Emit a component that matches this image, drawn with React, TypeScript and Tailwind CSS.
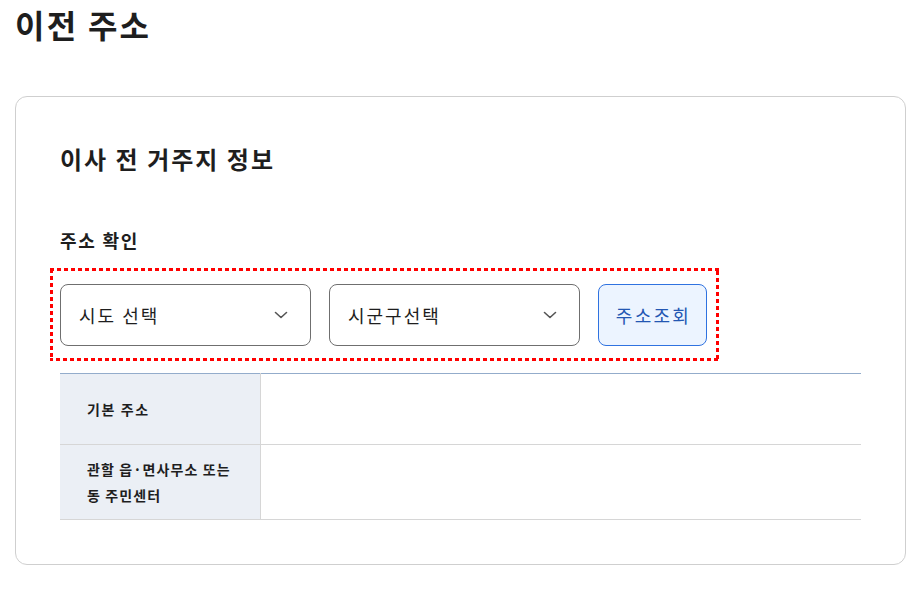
import { useState } from 'react';

const font = { fontFamily: '"Noto Sans CJK KR", "Noto Sans", sans-serif' };

function Chevron() {
  return (
    <svg width="14" height="8" viewBox="0 0 14 8" fill="none" className="shrink-0">
      <path d="M1.5 1.5 7 6.5l5.5-5" stroke="#555" strokeWidth="1.6" strokeLinecap="round" strokeLinejoin="round" />
    </svg>
  );
}

function SelectBox({ label }: { label: string }) {
  return (
    <button className="flex h-[62px] w-[251px] items-center justify-between rounded-lg border border-[#6f6f6f] bg-white pl-[18px] pr-[22px] text-[18px] tracking-[2px] text-[#1e1e1e]">
      <span>{label}</span>
      <Chevron />
    </button>
  );
}

export default function App() {
  const [sido] = useState('시도 선택');
  const [sigungu] = useState('시군구선택');

  return (
    <div className="min-h-[592px] bg-white pl-[15px] pr-[17px] text-[#1e1e1e]" style={font}>
      <h1 className="pt-[1px] text-[32px] font-bold leading-[46px] tracking-[2.25px]">이전 주소</h1>

      <div className="mt-[49px] rounded-xl border border-[#cfcfcf] p-11">
        <h2 className="text-[24px] font-bold leading-[36px] tracking-[2px]">이사 전 거주지 정보</h2>

        <h3 className="mt-[50px] text-[18px] font-bold leading-[27px] tracking-[1.75px]">주소 확인</h3>

        <div className="relative mt-[30px] flex w-fit gap-[18px]">
          <SelectBox label={sido} />
          <SelectBox label={sigungu} />
          <button className="h-[62px] w-[109px] rounded-lg border border-[#2f72e0] bg-[#ecf4ff] pl-[2px] text-[18px] tracking-[2.3px] text-[#2357b3]">
            주소조회
          </button>
          {/* 강조 표시 */}
          <svg className="pointer-events-none absolute -top-[16px] -left-[10px] h-[calc(100%+31px)] w-[calc(100%+22px)] overflow-hidden">
            <rect x="0" y="0" width="100%" height="100%" fill="none" stroke="#ff0000" strokeWidth="6" strokeDasharray="4 3" />
          </svg>
        </div>

        <table className="mt-[27px] w-full border-collapse border-t border-t-[#93accb] text-[14px]">
          <tbody>
            <tr className="border-b border-[#d6d6d6]">
              <th className="h-[71px] w-[200px] border-r border-[#d6d6d6] bg-[#ebeff5] pl-[27px] text-left font-bold tracking-[1.6px]">
                기본 주소
              </th>
              <td></td>
            </tr>
            <tr className="border-b border-[#d6d6d6]">
              <th className="h-[75px] w-[200px] border-r border-[#d6d6d6] bg-[#ebeff5] pl-[27px] pr-1 text-left font-bold leading-[26px] tracking-[1.1px]">
                관할 읍·면사무소 또는
                <br />
                동 주민센터
              </th>
              <td></td>
            </tr>
          </tbody>
        </table>
      </div>
    </div>
  );
}
